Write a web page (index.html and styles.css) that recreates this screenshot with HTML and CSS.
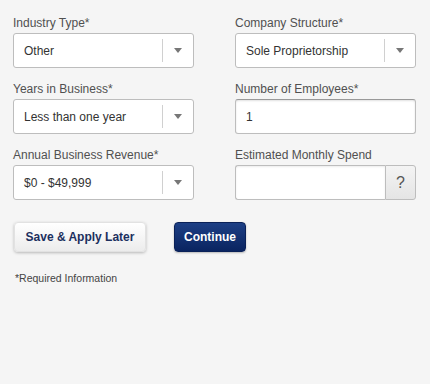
FILE: index.html
```html
<!DOCTYPE html>
<html lang="en">
<head>
    <meta charset="UTF-8">
    <meta name="viewport" content="width=device-width, initial-scale=1.0">
    <title>Business Information</title>
    <link rel="stylesheet" href="styles.css">
</head>
<body>
    <form class="business-form">
        <div class="fields">
            <div class="field">
                <label>Industry Type*</label>
                <div class="select-box">
                    <span class="select-value">Other</span>
                    <span class="select-arrow"></span>
                </div>
            </div>
            <div class="field">
                <label>Company Structure*</label>
                <div class="select-box">
                    <span class="select-value">Sole Proprietorship</span>
                    <span class="select-arrow"></span>
                </div>
            </div>
            <div class="field">
                <label>Years in Business*</label>
                <div class="select-box">
                    <span class="select-value">Less than one year</span>
                    <span class="select-arrow"></span>
                </div>
            </div>
            <div class="field">
                <label>Number of Employees*</label>
                <input type="text" class="text-input" value="1">
            </div>
            <div class="field">
                <label>Annual Business Revenue*</label>
                <div class="select-box">
                    <span class="select-value">$0 - $49,999</span>
                    <span class="select-arrow"></span>
                </div>
            </div>
            <div class="field">
                <label>Estimated Monthly Spend</label>
                <div class="input-group">
                    <input type="text" class="group-input">
                    <span class="help-addon">?</span>
                </div>
            </div>
        </div>

        <div class="actions">
            <button type="button" class="btn-secondary">Save &amp; Apply Later</button>
            <button type="button" class="btn-primary">Continue</button>
        </div>

        <p class="note">*Required Information</p>
    </form>
</body>
</html>
```

FILE: styles.css
```css
body {
    font-family: 'Liberation Sans', Arial, Helvetica, sans-serif;
    margin: 0;
    padding: 0;
    background: #f5f5f5;
    color: #333;
}

.business-form {
    padding: 15px 0 0 13px;
    width: 403px;
}

.fields {
    display: grid;
    grid-template-columns: 181px 181px;
    column-gap: 41px;
    row-gap: 13px;
}

.field label {
    display: block;
    font-size: 12px;
    line-height: 16px;
    color: #505050;
    margin-bottom: 2px;
}

.select-box {
    height: 35px;
    box-sizing: border-box;
    border: 1px solid #bdbdbd;
    border-radius: 3px;
    background: #fff;
    display: flex;
    align-items: center;
}

.select-value {
    flex: 1;
    padding-left: 10px;
    font-size: 12px;
    color: #333;
    white-space: nowrap;
}

.select-arrow {
    width: 30px;
    height: 23px;
    border-left: 1px solid #d0d0d0;
    position: relative;
}

.select-arrow::after {
    content: "";
    position: absolute;
    left: 11px;
    top: 9px;
    border-left: 4px solid transparent;
    border-right: 4px solid transparent;
    border-top: 5px solid #777;
}

.text-input {
    display: block;
    width: 100%;
    height: 35px;
    box-sizing: border-box;
    margin: 0;
    border: 1px solid #bdbdbd;
    border-top-color: #999;
    border-radius: 3px;
    background: #fff;
    box-shadow: inset 0 1px 2px rgba(0, 0, 0, 0.12);
    padding: 0 10px;
    font-family: inherit;
    font-size: 12px;
    color: #333;
}

.input-group {
    display: flex;
    height: 35px;
}

.group-input {
    flex: 1;
    min-width: 0;
    margin: 0;
    box-sizing: border-box;
    border: 1px solid #bdbdbd;
    border-right: none;
    border-radius: 3px 0 0 3px;
    background: #fff;
    box-shadow: inset 0 1px 2px rgba(0, 0, 0, 0.08);
    font-family: inherit;
}

.help-addon {
    width: 31px;
    box-sizing: border-box;
    border: 1px solid #bdbdbd;
    border-radius: 0 3px 3px 0;
    background: linear-gradient(to bottom, #f4f4f4, #e4e4e4);
    display: flex;
    align-items: center;
    justify-content: center;
    font-size: 16px;
    color: #555;
}

.actions {
    display: flex;
    gap: 28px;
    margin-top: 22px;
    padding-left: 1px;
}

.actions button {
    height: 30px;
    font-family: inherit;
    font-size: 12px;
    font-weight: bold;
    border-radius: 4px;
    cursor: pointer;
}

.btn-secondary {
    width: 132px;
    color: #1c2f5e;
    background: linear-gradient(to bottom, #ffffff, #ececec);
    border: 1px solid #e2e2e2;
    box-shadow: 0 1px 3px rgba(0, 0, 0, 0.25);
}

.btn-primary {
    width: 72px;
    color: #fff;
    background: linear-gradient(to bottom, #1d3f85, #0a2460);
    border: 1px solid #0a2158;
    box-shadow: 0 1px 2px rgba(0, 0, 0, 0.25);
}

.note {
    margin: 20px 0 0 2px;
    font-size: 10.5px;
    color: #444;
}
```
